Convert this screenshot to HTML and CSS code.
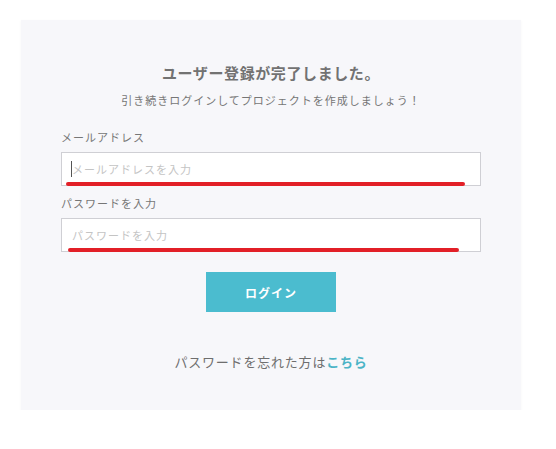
FILE: index.html
```html
<!DOCTYPE html>
<html lang="ja">
<head>
  <meta charset="UTF-8">
  <title>ユーザー登録完了</title>
  <link rel="stylesheet" href="styles.css">
</head>
<body>
  <div class="card">
    <h1 class="title">ユーザー登録が完了しました。</h1>
    <p class="lead">引き続きログインしてプロジェクトを作成しましょう！</p>

    <form class="form">
      <label class="label">メールアドレス</label>
      <div class="field">
        <input class="input" type="text" placeholder="メールアドレスを入力">
        <span class="caret"></span>
        <span class="mark mark-mail"></span>
      </div>

      <label class="label">パスワードを入力</label>
      <div class="field">
        <input class="input" type="password" placeholder="パスワードを入力">
        <span class="mark mark-pass"></span>
      </div>

      <div class="actions">
        <button class="btn" type="button">ログイン</button>
      </div>
    </form>

    <p class="forgot">パスワードを忘れた方は<a href="#">こちら</a></p>
  </div>
</body>
</html>
```

FILE: styles.css
```css
body {
  margin: 0;
  padding: 20px 0 0 21px;
  background-color: #ffffff;
  font-family: 'Noto Sans CJK JP', 'Noto Sans', sans-serif;
  color: #666666;
}

.card {
  width: 500px;
  height: 390px;
  box-sizing: border-box;
  padding: 40px 40px 0 40px;
  background-color: #f7f7fa;
  box-shadow: 0 1px 3px rgba(0, 0, 0, 0.04);
}

.title {
  margin: 0;
  text-align: center;
  font-size: 15px;
  font-weight: bold;
  line-height: 26px;
  color: #727272;
  letter-spacing: 0.6px;
}

.lead {
  margin: 5px 0 0 0;
  text-align: center;
  font-size: 11px;
  line-height: 18px;
  color: #767676;
  letter-spacing: 1px;
}

.form {
  margin-top: 19px;
}

.label {
  display: block;
  font-size: 11px;
  line-height: 18px;
  color: #767676;
  letter-spacing: 1px;
}

.field {
  position: relative;
  margin: 6px 0 8px 0;
}

.input {
  display: block;
  width: 420px;
  height: 34px;
  box-sizing: border-box;
  padding: 0 10px;
  border: 1px solid #cfcfd4;
  border-radius: 0;
  background-color: #ffffff;
  font-family: inherit;
  font-size: 11px;
  color: #555555;
  outline: none;
}

.input::placeholder {
  color: #c4c4c4;
  letter-spacing: 1px;
}

/* テキストカーソル */
.caret {
  position: absolute;
  left: 10px;
  top: 9px;
  width: 1px;
  height: 16px;
  background-color: #555555;
}

/* 赤いマーカー線 */
.mark {
  position: absolute;
  height: 4px;
  border-radius: 2px;
  background-color: #e21f27;
}

.mark-mail {
  left: 5px;
  width: 399px;
  top: 30px;
}

.mark-pass {
  left: 7px;
  width: 391px;
  top: 30px;
}

.actions {
  display: flex;
  justify-content: center;
  margin-top: 20px;
}

.btn {
  width: 130px;
  height: 40px;
  border: none;
  background-color: #4bbccf;
  color: #ffffff;
  font-family: inherit;
  font-size: 12px;
  font-weight: bold;
  letter-spacing: 1px;
  cursor: pointer;
}

.forgot {
  margin: 40px 0 0 -40px;
  width: 500px;
  text-align: center;
  font-size: 13px;
  line-height: 20px;
  color: #6e6e6e;
  letter-spacing: 0.8px;
}

.forgot a {
  color: #4bb4c6;
  font-weight: bold;
  text-decoration: none;
}
```
